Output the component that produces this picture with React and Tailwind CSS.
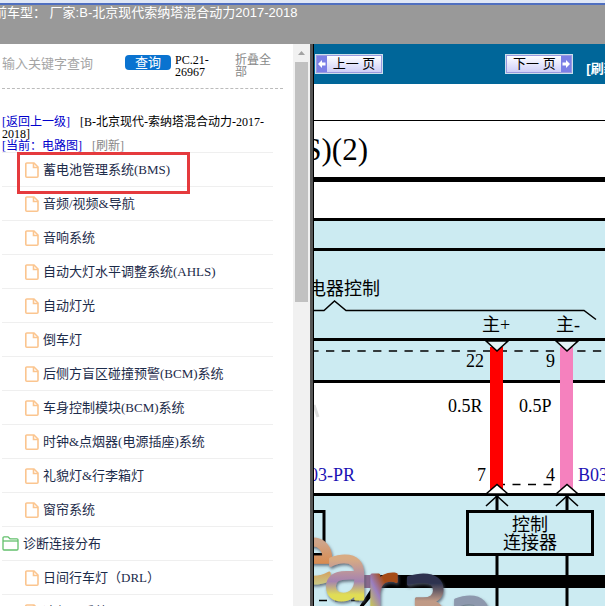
const items = [
  { label: '蓄电池管理系统(BMS)', highlighted: true },
  { label: '音频/视频&导航' },
  { label: '音响系统' },
  { label: '自动大灯水平调整系统(AHLS)' },
  { label: '自动灯光' },
  { label: '倒车灯' },
  { label: '后侧方盲区碰撞预警(BCM)系统' },
  { label: '车身控制模块(BCM)系统' },
  { label: '时钟&点烟器(电源插座)系统' },
  { label: '礼貌灯&行李箱灯' },
  { label: '窗帘系统' },
  { label: '诊断连接分布', folder: true },
  { label: '日间行车灯（DRL）' },
  { label: '冷却器系统' },
];

// x positions of the two wires in the diagram
const wires = [
  { x: 497, color: '#ff0000' },
  { x: 567, color: '#f581be' },
];

function FileIcon() {
  return (
    <svg width="14" height="16" viewBox="0 0 14 16" fill="none" stroke="#fbc58f" strokeWidth="1.6">
      <path d="M1.8 1H9l4 4v9.2a1 1 0 0 1-1 1H1.8a1 1 0 0 1-1-1V2a1 1 0 0 1 1-1z" />
      <path d="M8.500 1v4.500H13" />
    </svg>
  );
}

function FolderIcon() {
  return (
    <svg width="17" height="15" viewBox="0 0 17 15" fill="none" stroke="#63c06c" strokeWidth="1.3">
      <path d="M1 13V1.8a1 1 0 0 1 1-1h4l2 2h7a1 1 0 0 1 1 1V13a1 1 0 0 1-1 1H2a1 1 0 0 1-1-1z" />
      <path d="M1 5h15" />
    </svg>
  );
}

function ArrowBox({ flip }) {
  return (
    <svg
      width="10"
      height="16"
      viewBox="0 0 10 16"
      className={flip ? 'shrink-0 -scale-x-100' : 'shrink-0'}
    >
      <rect width="10" height="16" fill="#7b7fe6" />
      <path d="M1 8l4-4v2.500h3.500v3H5V12z" fill="#fff" />
    </svg>
  );
}

function PageButton({ label, next }) {
  return (
    <button
      type="button"
      className="flex h-[18px] items-center whitespace-nowrap border border-[#9a9ae0] bg-linear-to-b from-white to-[#cfcff8] text-[13px] leading-4 text-black outline outline-white/80"
    >
      {!next && <ArrowBox />}
      <span className="w-[54px] text-center">{label}</span>
      {next && <ArrowBox flip />}
    </button>
  );
}

function MenuItem({ item }) {
  return (
    <li className="relative h-[34px] border-t border-[#efefef]">
      <a
        href="#"
        className={`flex h-[33px] items-center gap-1 text-[13px] text-[#1c2b4a] ${
          item.folder ? '' : 'pl-[23px]'
        }`}
      >
        {item.folder ? <FolderIcon /> : <FileIcon />}
        <span className="whitespace-nowrap">{item.label}</span>
      </a>
      {item.highlighted && (
        <span className="absolute -top-px left-[15px] z-10 h-[42px] w-[173px] border-3 border-[#e53a3d]" />
      )}
    </li>
  );
}

function Sidebar() {
  return (
    <aside className="flex w-[314px] shrink-0 overflow-hidden">
      <div className="min-w-0 flex-1 pl-0.5">
        <div className="mr-2.5 flex h-[45px] items-start border-b border-dashed border-[#bbb] text-xs leading-3">
          <input
            type="text"
            aria-label="关键字"
            placeholder="输入关键字查询"
            className="mt-2.5 h-5 w-[123px] shrink-0 text-[13px] outline-none placeholder:text-[#a5a5a5]"
          />
          <button
            type="button"
            className="mt-[11px] h-[15px] w-[46px] shrink-0 rounded bg-[#0a73d0] text-[13px] leading-[15px] text-white"
          >
            查询
          </button>
          <span className="ml-1 mt-2.5 w-9 shrink-0">PC.21-26967</span>
          <a href="#" className="ml-6 mt-2.5 w-10 shrink-0 text-[#888]">
            折叠全部
          </a>
        </div>

        <div className="mr-5 mt-[27px] text-xs leading-3">
          <a href="#" className="text-[#0000cc]">[返回上一级]</a>
          <span className="ml-2.5">[B-北京现代-索纳塔混合动力-2017-2018]</span>
          <br />
          <a href="#" className="text-[#0000cc]">[当前：电路图]</a>
          <a href="#" className="ml-2.5 text-[#888]">[刷新]</a>
        </div>

        <ul className="mr-5">
          {items.map((item) => (
            <MenuItem key={item.label} item={item} />
          ))}
        </ul>
      </div>

      <div className="flex w-[17px] flex-col items-center bg-[#f1f1f1]">
        <svg width="17" height="18" viewBox="0 0 17 18">
          <path d="M5 11l3.5-4 3.5 4z" fill="#a3a3a3" />
        </svg>
        <div className="h-60 w-[13px] bg-[#c1c1c1]" />
      </div>
      <div className="w-1 border-r border-black bg-[#555]" />
    </aside>
  );
}

function Wire({ x, color }) {
  return (
    <g stroke="#000" strokeWidth="1.6">
      <rect x={x - 7} y="347" width="13" height="143" fill={color} stroke="none" />
      <path d={`M${x - 11} 341l11 10 11-10z`} fill="#e4f5f8" />
      <path d={`M${x - 11} 494l11-9.5 11 9.5z`} fill="#fff" />
      <path d={`M${x - 11} 506l11-10 11 10`} fill="none" />
      <path d={`M${x} 496v15M${x} 556v120`} strokeWidth="3" />
    </g>
  );
}

function WiringDiagram() {
  return (
    <svg
      className="block w-full flex-1 font-['Liberation_Serif','Noto_Sans_CJK_SC',serif]"
      role="img"
      aria-label="电路图"
    >
      <defs>
        <linearGradient id="mark-e" x1="0" y1="0" x2="0" y2="1">
          <stop offset="0.35" stopColor="#cfa58a" />
          <stop offset="0.6" stopColor="#d98a4d" />
          <stop offset="0.85" stopColor="#c9d08a" />
        </linearGradient>
        <linearGradient id="mark-a" x1="0" y1="0" x2="0" y2="1">
          <stop offset="0.35" stopColor="#d8ab83" />
          <stop offset="0.6" stopColor="#a583b0" />
          <stop offset="0.75" stopColor="#e0dd55" />
        </linearGradient>
        <linearGradient id="mark-r" x1="0" y1="1" x2="0.7" y2="0">
          <stop offset="0.3" stopColor="#c9c654" />
          <stop offset="0.5" stopColor="#9b7fc0" />
          <stop offset="0.7" stopColor="#a54c14" />
        </linearGradient>
        <linearGradient id="mark-3" x1="0" y1="0" x2="0" y2="1">
          <stop offset="0.25" stopColor="#2d3350" />
          <stop offset="0.45" stopColor="#c09a86" />
        </linearGradient>
        <filter id="mark-shadow" x="-20%" y="-20%" width="140%" height="140%">
          <feDropShadow dx="1" dy="2" stdDeviation="1.5" floodColor="#4b5563" floodOpacity="0.8" />
        </filter>
      </defs>

      {/* the sheet is scrolled, so its origin lies outside the frame */}
      <g transform="translate(-314 -84)">
        <rect x="0" y="219" width="2000" height="163" fill="#ccebf2" />
        <rect x="0" y="494" width="2000" height="1000" fill="#ccebf2" />

        <path
          d="M0 219.5h2000M0 249.5h2000M0 339.5h2000M0 381.5h2000M0 494.5h2000"
          stroke="#000"
          strokeWidth="3"
        />
        <path d="M0 120.5h2000" stroke="#000" />
        <rect x="0" y="177" width="2000" height="5" />
        <path d="M380 575h1600v13H379l-16 19h-4z" />
        <rect x="360" y="575" width="17" height="13" fill="#8a6a8e" />

        <path
          d="M310.3 351h1600"
          stroke="#000"
          strokeWidth="1.5"
          strokeDasharray="8.3 7.4"
        />
        <path d="M497 484.5h60" stroke="#000" strokeWidth="1.5" strokeDasharray="8 7.5" />
        <path d="M319 600.5h40" stroke="#000" strokeWidth="1.5" strokeDasharray="8 8" />
        <path
          d="M314 310.5h10l10.500-9.500 11.500 9.500h238l12 9"
          fill="none"
          stroke="#000"
          strokeWidth="1.5"
        />
        <path d="M314 405l4 12" stroke="#ddd" strokeWidth="3" />

        {wires.map((wire) => (
          <Wire key={wire.x} x={wire.x} color={wire.color} />
        ))}

        <rect x="467.500" y="511.500" width="125" height="43" fill="#ccebf2" stroke="#000" strokeWidth="3" />
        <rect x="200" y="511.500" width="124" height="43" fill="#ccebf2" stroke="#000" strokeWidth="3" />

        <g className="text-[31px]">
          <text x="368" y="160" textAnchor="end">(BMS)(2)</text>
        </g>
        <g className="text-[18px]">
          <text x="380" y="295" textAnchor="end">继电器控制</text>
          <text x="482" y="331">主+</text>
          <text x="556" y="331">主-</text>
          <text x="466" y="367">22</text>
          <text x="546" y="367">9</text>
          <text x="448" y="412">0.5R</text>
          <text x="519" y="412">0.5P</text>
          <text x="477" y="481">7</text>
          <text x="546" y="481">4</text>
          <text x="530" y="531" textAnchor="middle">控制</text>
          <text x="530" y="549" textAnchor="middle">连接器</text>
          <g className="fill-[#1c12b4]">
            <text x="355" y="481" textAnchor="end">B03-PR</text>
            <text x="578" y="481">B03-PR</text>
          </g>
        </g>

        <g
          className="font-['DejaVu_Sans'] text-[76px]"
          strokeWidth="3"
          strokeLinejoin="round"
          filter="url(#mark-shadow)"
        >
          <text x="288" y="582" fill="url(#mark-e)" stroke="url(#mark-e)">e</text>
          <text x="323" y="599" fill="url(#mark-a)" stroke="url(#mark-a)">a</text>
          <text x="365" y="617" fill="url(#mark-r)" stroke="url(#mark-r)">r</text>
          <text x="401" y="632" fill="url(#mark-3)" stroke="url(#mark-3)">3</text>
          <text x="448" y="640" fill="#8d98ad" stroke="#8d98ad">a</text>
        </g>
      </g>
    </svg>
  );
}

export default function App() {
  return (
    <div className="flex h-screen flex-col overflow-hidden bg-white font-['Liberation_Serif','Noto_Sans_CJK_SC',serif] text-black">
      <header className="h-11 shrink-0 overflow-hidden border-t-3 border-[#dfe7f6] bg-[#999]">
        <p className="-indent-1.5 whitespace-nowrap border-t-2 border-[#4f6fc0] font-['Liberation_Sans','Noto_Sans_CJK_SC',sans-serif] text-[13px] leading-4 text-white">
          前车型：&nbsp;厂家:B-北京现代索纳塔混合动力2017-2018
        </p>
      </header>

      <div className="flex min-h-0 flex-1">
        <Sidebar />
        <main className="flex min-w-0 flex-1 flex-col">
          <nav className="flex h-10 shrink-0 items-center justify-between overflow-hidden bg-[#006699] pl-0.5 font-['Liberation_Sans','Noto_Sans_CJK_SC',sans-serif]">
            <PageButton label="上一 页" />
            <div className="-mr-4 flex items-center gap-3.5">
              <PageButton label="下一 页" next />
              <a href="#" className="mt-2.5 whitespace-nowrap text-[13px] font-bold text-white">
                [刷新]
              </a>
            </div>
          </nav>
          <WiringDiagram />
        </main>
      </div>
    </div>
  );
}
